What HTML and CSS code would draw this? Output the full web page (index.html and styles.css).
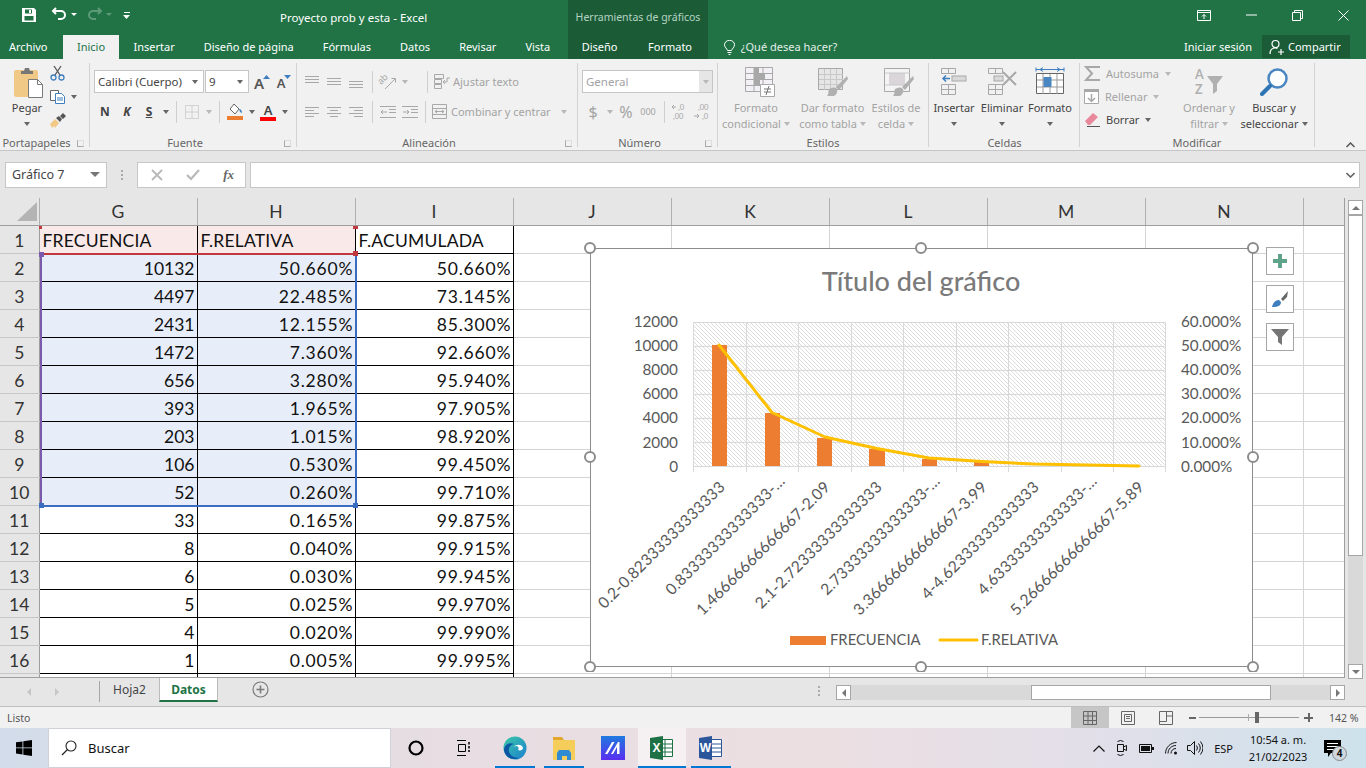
FILE: index.html
```html
<!DOCTYPE html>
<html lang="es">
<head>
  <meta charset="UTF-8" />
  <title>Proyecto prob y esta - Excel</title>
  <link rel="stylesheet" href="styles.css">
</head>
<body>

  <!-- barra de titulo -->
  <header class="titlebar">
    <div class="qat">
      <svg class="qat-save" width="16" height="16" viewBox="0 0 16 16"><path fill="#fff" fill-rule="evenodd" d="M1 1h12l2 2v12H1zM4 2.500v4h7v-4zM3.500 9v4.500h9V9z"/><rect x="8" y="3" width="2" height="3" fill="#fff"/></svg>
      <svg class="qat-undo" width="17" height="14" viewBox="0 0 17 14"><path fill="none" stroke="#fff" stroke-width="2" d="M5 1 2 4l3 3M2 4h8a4 4 0 0 1 0 8H7"/></svg>
      <span class="qat-caret"></span>
      <svg class="qat-redo" width="17" height="14" viewBox="0 0 17 14"><path fill="none" stroke="#5c9a78" stroke-width="2" d="M12 1l3 3-3 3M15 4H7a4 4 0 0 0 0 8h3"/></svg>
      <span class="qat-caret dim"></span>
      <svg class="qat-more" width="8" height="8" viewBox="0 0 8 8"><path fill="#fff" d="M1 0h6v1H1zM0 3h7L3.500 7z"/></svg>
    </div>
    <div class="doc-title">Proyecto prob y esta - Excel</div>
    <div class="context-title">Herramientas de gráficos</div>
    <div class="win-btns">
      <svg width="14" height="11" viewBox="0 0 14 11"><path fill="none" stroke="#fff" d="M.5.500h13v10H.500zM.5 2.500h13M7 9V4.500M5 6.500l2-2 2 2"/></svg>
      <svg width="11" height="2" viewBox="0 0 11 2"><path stroke="#fff" d="M0 1h11"/></svg>
      <svg width="11" height="11" viewBox="0 0 11 11"><path fill="none" stroke="#fff" d="M.5 2.500h8v8h-8zM2.500 2.500v-2h8v8h-2"/></svg>
      <svg width="11" height="11" viewBox="0 0 11 11"><path stroke="#fff" d="M.5.500l10 10M10.500.500l-10 10"/></svg>
    </div>
  </header>

  <!-- pestanas -->
  <nav class="tabs">
    <span class="tab tab-file">Archivo</span>
    <span class="tab active">Inicio</span>
    <span class="tab">Insertar</span>
    <span class="tab">Diseño de página</span>
    <span class="tab">Fórmulas</span>
    <span class="tab">Datos</span>
    <span class="tab">Revisar</span>
    <span class="tab">Vista</span>
    <div class="context-tabs">
      <span class="tab">Diseño</span>
      <span class="tab">Formato</span>
    </div>
    <div class="tell-me">
      <svg width="11" height="15" viewBox="0 0 11 15"><path fill="none" stroke="#fff" d="M3.500 10.500C3 8.500.5 7.500.5 4.800a5 4.500 0 0 1 10 0c0 2.700-2.500 3.700-3 5.700zM3.500 12.500h4M4.500 14.500h2"/></svg>
      <span>¿Qué desea hacer?</span>
    </div>
    <span class="signin">Iniciar sesión</span>
    <div class="share">
      <svg width="15" height="16" viewBox="0 0 15 16"><path fill="none" stroke="#fff" stroke-width="1.200" d="M6.500 1.500a3.500 3.500 0 1 1 0 7 3.500 3.500 0 0 1 0-7zM1 15c0-3.500 2-6 5.500-6 1 0 1.500.2 2 .4M9 13h6M12 10v6"/></svg>
      <span>Compartir</span>
    </div>
  </nav>

  <!-- cinta -->
  <div class="ribbon">

    <section class="group g-clip">
      <div class="group-body clip-body">
        <div class="paste">
          <svg width="30" height="32" viewBox="0 0 30 32">
            <rect x="0" y="3" width="24" height="27" rx="2" fill="#f0c987"/>
            <path fill="#777" d="M7 4h3l1-3h4l1 3h3v3H7z"/>
            <path fill="#fff" stroke="#7a7a7a" d="M14.500 12.500h9l5 5v13h-14z"/>
            <path fill="none" stroke="#7a7a7a" d="M23.500 12.500v5h5"/>
          </svg>
          <span>Pegar</span>
          <span class="caret"></span>
        </div>
        <div class="clip-tools">
          <svg width="15" height="16" viewBox="0 0 15 16"><path fill="none" stroke="#555" stroke-width="1.300" d="M4 1l6 9M11 1L5 10"/><circle cx="3.500" cy="12.500" r="2.500" fill="none" stroke="#3f7fbf" stroke-width="1.300"/><circle cx="11.500" cy="12.500" r="2.500" fill="none" stroke="#3f7fbf" stroke-width="1.300"/></svg>
          <div class="clip-copy">
            <svg width="15" height="14" viewBox="0 0 15 14"><path fill="#fff" stroke="#666" d="M.5.500h8v10h-8z"/><path fill="#fff" stroke="#3f7fbf" d="M5.500 3.500h6l3 3v7h-9z"/><path stroke="#3f7fbf" d="M7 8h6M7 10h6"/></svg>
            <span class="caret"></span>
          </div>
          <svg width="16" height="15" viewBox="0 0 16 15"><path fill="#f0c987" d="M0 11l5-5 4 4-4 5-1-2-2 2-1-2z"/><path fill="#555" d="M6 5l3-2 3 3-2 3zM10 3l3-3 3 3-3 3z"/></svg>
        </div>
      </div>
      <div class="group-label"><i></i><span>Portapapeles</span><b class="launcher"></b></div>
    </section>

    <section class="group g-font">
      <div class="group-body stack">
        <div class="tool-row">
          <div class="combo combo-font"><span>Calibri (Cuerpo)</span><span class="caret"></span></div>
          <div class="combo combo-size"><span>9</span><span class="caret"></span></div>
          <div class="tool grow-a">A<svg width="7" height="4" viewBox="0 0 7 4"><path fill="#3f7fbf" d="M0 4l3.500-4L7 4z"/></svg></div>
          <div class="tool shrink-a">A<svg width="7" height="4" viewBox="0 0 7 4"><path fill="#3f7fbf" d="M0 0h7L3.500 4z"/></svg></div>
        </div>
        <div class="tool-row">
          <div class="tool fmt">N</div>
          <div class="tool fmt fmt-i">K</div>
          <div class="tool fmt fmt-u">S</div>
          <div class="drop"><span class="caret"></span></div>
          <div class="sep"></div>
          <div class="tool">
            <svg width="14" height="14" viewBox="0 0 14 14"><path fill="none" stroke="#b5b5b5" stroke-dasharray="1 1" d="M.5.500h13v13H.500zM7 .5v13M.5 7h13"/></svg>
          </div>
          <div class="drop"><span class="caret off"></span></div>
          <div class="sep"></div>
          <div class="tool">
            <svg width="17" height="17" viewBox="0 0 17 17"><path fill="#fff" stroke="#666" d="M3 6l4-5 5 5-4 5z"/><path fill="#3f7fbf" d="M12 6c2 0 3 2 3 4l-2-1z"/><rect y="13" width="16" height="4" fill="#ed7d31"/></svg>
          </div>
          <div class="drop"><span class="caret"></span></div>
          <div class="tool color-a"><span>A</span><i></i></div>
          <div class="drop"><span class="caret"></span></div>
        </div>
      </div>
      <div class="group-label"><i></i><span>Fuente</span><b class="launcher"></b></div>
    </section>

    <section class="group g-align">
      <div class="group-body stack off-text">
        <div class="tool-row">
          <div class="tool"><svg width="14" height="14" viewBox="0 0 14 14"><path stroke="#a8a8a8" d="M0 1.500h14M0 4.500h14M0 7.500h14"/></svg></div>
          <div class="tool"><svg width="14" height="14" viewBox="0 0 14 14"><path stroke="#a8a8a8" d="M0 3.500h14M0 6.500h14M0 9.500h14"/></svg></div>
          <div class="tool"><svg width="14" height="14" viewBox="0 0 14 14"><path stroke="#a8a8a8" d="M0 6.500h14M0 9.500h14M0 12.500h14"/></svg></div>
          <div class="sep"></div>
          <div class="tool"><svg width="26" height="26" viewBox="-4 -5 26 26"><text transform="translate(2 11) rotate(-45)" class="orient">ab</text><path fill="none" stroke="#a8a8a8" d="M6 15L16 5M12.500 4.500h4v4"/></svg></div>
          <div class="drop"><span class="caret off"></span></div>
          <div class="sep sep-far"></div>
          <div class="text-tool wrap-text">
            <svg width="16" height="15" viewBox="0 0 16 15"><path fill="none" stroke="#a8a8a8" d="M.5.500h9v4h-9zM.5 5.500h7v4h-7zM.5 10.500h7v4h-7zM16 4h-3v4H9M11 6L9 8l2 2"/></svg>
            <span>Ajustar texto</span>
          </div>
        </div>
        <div class="tool-row">
          <div class="tool"><svg width="14" height="12" viewBox="0 0 14 12"><path stroke="#a8a8a8" d="M0 1.500h14M0 4.500h9M0 7.500h14M0 10.500h9"/></svg></div>
          <div class="tool"><svg width="14" height="12" viewBox="0 0 14 12"><path stroke="#a8a8a8" d="M0 1.500h14M3 4.500h8M0 7.500h14M3 10.500h8"/></svg></div>
          <div class="tool"><svg width="14" height="12" viewBox="0 0 14 12"><path stroke="#a8a8a8" d="M0 1.500h14M5 4.500h9M0 7.500h14M5 10.500h9"/></svg></div>
          <div class="sep"></div>
          <div class="tool"><svg width="16" height="12" viewBox="0 0 16 12"><path fill="none" stroke="#a8a8a8" d="M0 .5h16M9 3.500h7M9 6.500h7M0 11.500h16M7 6H1M3 4L1 6l2 2"/></svg></div>
          <div class="tool"><svg width="16" height="12" viewBox="0 0 16 12"><path fill="none" stroke="#a8a8a8" d="M0 .5h16M9 3.500h7M9 6.500h7M0 11.500h16M1 6h6M5 4l2 2-2 2"/></svg></div>
          <div class="sep sep-near"></div>
          <div class="text-tool merge">
            <svg width="15" height="15" viewBox="0 0 15 15"><path fill="none" stroke="#a8a8a8" d="M.5.500h14v14H.500zM.5 4.500h14M.5 10.500h14M3 7.500h9M5 6L3 7.500 5 9M10 6l2 1.500L10 9"/></svg>
            <span>Combinar y centrar</span>
            <span class="caret off"></span>
          </div>
        </div>
      </div>
      <div class="group-label"><i></i><span>Alineación</span><b class="launcher"></b></div>
    </section>

    <section class="group g-number">
      <div class="group-body stack">
        <div class="tool-row">
          <div class="combo combo-number"><span>General</span><div class="combo-btn"><span class="caret off"></span></div></div>
        </div>
        <div class="tool-row num-tools">
          <div class="tool num-big">$</div>
          <div class="drop"><span class="caret off"></span></div>
          <div class="tool num-big">%</div>
          <div class="tool num-000">000</div>
          <div class="sep"></div>
          <div class="tool"><svg width="18" height="19" viewBox="0 0 18 19"><path fill="none" stroke="#a8a8a8" d="M5 5H1M3 3L1 5l2 2"/><text x="7" y="8" class="tiny">,0</text><text x="2" y="17" class="tiny">,00</text></svg></div>
          <div class="tool"><svg width="18" height="19" viewBox="0 0 18 19"><path fill="none" stroke="#a8a8a8" d="M1 14h5M4 12l2 2-2 2"/><text x="5" y="8" class="tiny">,00</text><text x="9" y="17" class="tiny">,0</text></svg></div>
        </div>
      </div>
      <div class="group-label"><i></i><span>Número</span><b class="launcher"></b></div>
    </section>

    <section class="group g-styles">
      <div class="group-body big-row off-text">
        <div class="big big-cond">
          <svg width="30" height="30" viewBox="0 0 30 30"><path fill="#f4f1f6" stroke="#a8a8a8" d="M.5.500h27v24H.500z"/><path stroke="#a8a8a8" d="M9 1v24M18 1v24M1 6.500h27M1 12.500h27M1 18.500h27"/><path fill="#a8a8a8" d="M9 1h5v5H9zM9 7h11v5H9zM9 13h6v5H9z"/><path fill="#fff" stroke="#a8a8a8" d="M15.500 17.500h14v12h-14z"/><path stroke="#777" d="M19 22h7M19 25h7M21 28l3-9"/></svg>
          <span>Formato<br>condicional<span class="caret off inline"></span></span>
        </div>
        <div class="big big-table">
          <svg width="30" height="30" viewBox="0 0 30 30"><path fill="#e6e6e6" stroke="#a8a8a8" d="M.5 1.500h24v21H.500z"/><path stroke="#c8c8c8" d="M6.500 2v21M12.500 2v21M18.500 2v21M1 7.500h24M1 12.500h24M1 17.500h24"/><path fill="#b0b0b0" d="M29 9L18 20l3 3L30 12zM11 22c3-2 6-2 8 0 1 3-1 6-3 7h-7c2-2 1-5 2-7z"/></svg>
          <span>Dar formato<br>como tabla<span class="caret off inline"></span></span>
        </div>
        <div class="big big-cell">
          <svg width="30" height="30" viewBox="0 0 30 30"><path fill="#f4f4f4" stroke="#a8a8a8" d="M.5 1.500h25v23H.500z"/><rect x="5" y="6" width="16" height="12" fill="#d9d5d9"/><path stroke="#c8c8c8" d="M1 6h25M1 18h25"/><path fill="#b0b0b0" d="M29 9L18 20l3 3L30 12zM11 22c3-2 6-2 8 0 1 3-1 6-3 7h-7c2-2 1-5 2-7z"/></svg>
          <span>Estilos de<br>celda<span class="caret off inline"></span></span>
        </div>
      </div>
      <div class="group-label plain"><i></i><span>Estilos</span><i></i></div>
    </section>

    <section class="group g-cells">
      <div class="group-body big-row">
        <div class="big big-48">
          <svg width="30" height="30" viewBox="0 0 30 30"><path fill="none" stroke="#a8a8a8" d="M2.500 1.500h14v5h-14zM9.500 1.500v5M2.500 17.500h14v10h-14zM2.500 22.500h14M9.500 17.500v10"/><rect x="13" y="9" width="14" height="5" fill="#d9d9d9" stroke="#a8a8a8"/><path fill="none" stroke="#3f7fbf" stroke-width="1.500" d="M11 11.500H4M7 8.500l-3 3 3 3"/></svg>
          <span>Insertar</span><span class="caret"></span>
        </div>
        <div class="big big-48">
          <svg width="30" height="30" viewBox="0 0 30 30"><path fill="none" stroke="#a8a8a8" d="M1.500 1.500h14v5h-14zM8.500 1.500v5M1.500 17.500h14v10h-14zM1.500 22.500h14M8.500 17.500v10"/><rect x="7" y="9" width="9" height="5" fill="#d9d9d9" stroke="#a8a8a8"/><path fill="none" stroke="#a8a8a8" stroke-width="2" d="M16 5l13 13M29 5L16 18"/></svg>
          <span>Eliminar</span><span class="caret"></span>
        </div>
        <div class="big big-48">
          <svg width="30" height="30" viewBox="0 0 30 30"><path fill="none" stroke="#3f7fbf" d="M1 2.500h28M1 .5v4M29 .5v4M5 2.500l3-2M5 2.500l3 2M25 2.500l-3-2M25 2.500l-3 2"/><path fill="#fff" stroke="#666" d="M1.500 6.500h27v20H1.500z"/><path stroke="#999" d="M8 7v20M15 7v20M22 7v20M2 13h26M2 20h26"/><rect x="8.500" y="10" width="8" height="10" fill="#4a86c2"/></svg>
          <span>Formato</span><span class="caret"></span>
        </div>
      </div>
      <div class="group-label plain"><i></i><span>Celdas</span><i></i></div>
    </section>

    <section class="group g-edit">
      <div class="group-body big-row">
        <div class="edit-col">
          <div class="edit-item off-text">
            <svg width="16" height="15" viewBox="0 0 16 15"><path fill="none" stroke="#a8a8a8" stroke-width="2" d="M15 2V1H2l6 6.500L2 14h13v-1"/></svg>
            <span>Autosuma</span><span class="caret off"></span>
          </div>
          <div class="edit-item off-text">
            <svg width="15" height="15" viewBox="0 0 15 15"><path fill="#fff" stroke="#a8a8a8" d="M.5.500h14v14H.500z"/><rect width="15" height="3" fill="#a8a8a8"/><path fill="none" stroke="#a8a8a8" stroke-width="1.500" d="M7.500 5v7M4 9l3.500 3.500L11 9"/></svg>
            <span>Rellenar</span><span class="caret off"></span>
          </div>
          <div class="edit-item">
            <svg width="16" height="15" viewBox="0 0 16 15"><path fill="#e8899b" d="M1 9l8-8 5 4-8 8H4z"/><path stroke="#555" d="M3 14.500h13"/></svg>
            <span>Borrar</span><span class="caret"></span>
          </div>
        </div>
        <div class="big big-sort off-text">
          <svg width="30" height="30" viewBox="0 0 30 30"><text x="1" y="12" class="az">A</text><text x="1" y="27" class="az">Z</text><path fill="#b0b0b0" d="M13 9h16l-6 8v7l-4 3V17z"/></svg>
          <span>Ordenar y<br>filtrar<span class="caret off inline"></span></span>
        </div>
        <div class="big big-find">
          <svg width="30" height="30" viewBox="0 0 30 30"><circle cx="18.500" cy="11.500" r="9" fill="#fff" stroke="#4a86c2" stroke-width="2.500"/><path stroke="#2e75b6" stroke-width="4" stroke-linecap="round" d="M11 19l-8 8"/></svg>
          <span>Buscar y<br>seleccionar<span class="caret inline"></span></span>
        </div>
      </div>
      <div class="group-label plain"><i></i><span>Modificar</span><i></i></div>
    </section>

    <svg class="collapse" width="9" height="6" viewBox="0 0 9 6"><path fill="none" stroke="#555" stroke-width="1.500" d="M.5 5l4-4 4 4"/></svg>
  </div>

  <!-- barra de formulas -->
  <div class="formula-bar">
    <div class="name-box"><span>Gráfico 7</span><span class="caret dark"></span></div>
    <div class="fb-dots"></div>
    <div class="fb-btns">
      <svg width="12" height="12" viewBox="0 0 12 12"><path stroke="#b8b8b8" stroke-width="1.800" d="M1 1l10 10M11 1L1 11"/></svg>
      <svg width="14" height="12" viewBox="0 0 14 12"><path fill="none" stroke="#b8b8b8" stroke-width="2.200" d="M1 6l4 4 8-9"/></svg>
      <span class="fx">fx</span>
    </div>
    <div class="fb-input">
      <svg width="9" height="6" viewBox="0 0 9 6"><path fill="none" stroke="#666" stroke-width="1.600" d="M.5 1l4 4 4-4"/></svg>
    </div>
  </div>

  <!-- hoja -->
  <main class="sheet-area">
    <div class="sheet">
      <table class="grid">
        <thead>
          <tr>
            <th class="corner"><svg width="20" height="19" viewBox="0 0 20 19"><path fill="#b4b4b4" d="M20 0v19H0z"/></svg></th>
            <th>G</th><th>H</th><th>I</th><th>J</th><th>K</th><th>L</th><th>M</th><th>N</th><th class="filler"></th>
          </tr>
        </thead>
        <tbody>
          <tr class="first"><th>1</th><td class="data head-sel txt">FRECUENCIA</td><td class="data head-sel txt">F.RELATIVA</td><td class="data txt">F.ACUMULADA</td><td></td><td></td><td></td><td></td><td></td><td></td></tr>
          <tr><th>2</th><td class="data sel">10132</td><td class="data sel pct">50.660%</td><td class="data pct">50.660%</td><td></td><td></td><td></td><td></td><td></td><td></td></tr>
          <tr><th>3</th><td class="data sel">4497</td><td class="data sel pct">22.485%</td><td class="data pct">73.145%</td><td></td><td></td><td></td><td></td><td></td><td></td></tr>
          <tr><th>4</th><td class="data sel">2431</td><td class="data sel pct">12.155%</td><td class="data pct">85.300%</td><td></td><td></td><td></td><td></td><td></td><td></td></tr>
          <tr><th>5</th><td class="data sel">1472</td><td class="data sel pct">7.360%</td><td class="data pct">92.660%</td><td></td><td></td><td></td><td></td><td></td><td></td></tr>
          <tr><th>6</th><td class="data sel">656</td><td class="data sel pct">3.280%</td><td class="data pct">95.940%</td><td></td><td></td><td></td><td></td><td></td><td></td></tr>
          <tr><th>7</th><td class="data sel">393</td><td class="data sel pct">1.965%</td><td class="data pct">97.905%</td><td></td><td></td><td></td><td></td><td></td><td></td></tr>
          <tr><th>8</th><td class="data sel">203</td><td class="data sel pct">1.015%</td><td class="data pct">98.920%</td><td></td><td></td><td></td><td></td><td></td><td></td></tr>
          <tr><th>9</th><td class="data sel">106</td><td class="data sel pct">0.530%</td><td class="data pct">99.450%</td><td></td><td></td><td></td><td></td><td></td><td></td></tr>
          <tr><th>10</th><td class="data sel">52</td><td class="data sel pct">0.260%</td><td class="data pct">99.710%</td><td></td><td></td><td></td><td></td><td></td><td></td></tr>
          <tr><th>11</th><td class="data">33</td><td class="data pct">0.165%</td><td class="data pct">99.875%</td><td></td><td></td><td></td><td></td><td></td><td></td></tr>
          <tr><th>12</th><td class="data">8</td><td class="data pct">0.040%</td><td class="data pct">99.915%</td><td></td><td></td><td></td><td></td><td></td><td></td></tr>
          <tr><th>13</th><td class="data">6</td><td class="data pct">0.030%</td><td class="data pct">99.945%</td><td></td><td></td><td></td><td></td><td></td><td></td></tr>
          <tr><th>14</th><td class="data">5</td><td class="data pct">0.025%</td><td class="data pct">99.970%</td><td></td><td></td><td></td><td></td><td></td><td></td></tr>
          <tr><th>15</th><td class="data">4</td><td class="data pct">0.020%</td><td class="data pct">99.990%</td><td></td><td></td><td></td><td></td><td></td><td></td></tr>
          <tr><th>16</th><td class="data">1</td><td class="data pct">0.005%</td><td class="data pct">99.995%</td><td></td><td></td><td></td><td></td><td></td><td></td></tr>
          <tr><th></th><td class="data"></td><td class="data"></td><td class="data"></td><td></td><td></td><td></td><td></td><td></td><td></td></tr>
        </tbody>
      </table>

      <!-- marcas del rango de datos -->
      <i class="mark mark-red"></i>
      <i class="mark mark-purple"></i>
      <i class="mark mark-blue-r"></i>
      <i class="mark mark-blue-b"></i>
      <i class="knob knob-r1"></i>
      <i class="knob knob-r2"></i>
      <i class="knob knob-r3"></i>
      <i class="knob knob-p1"></i>
      <i class="knob knob-b1"></i>
      <i class="knob knob-b2"></i>

      <!-- grafico -->
      <svg class="chart" width="680" height="432" viewBox="582 240 680 432">
        <defs>
          <pattern id="hatch" width="4" height="4" patternUnits="userSpaceOnUse">
            <rect width="4" height="4" fill="#fff"/>
            <path d="M-1 1l2 -2M0 0l4 4M3 5l2-2" stroke="#dedede" stroke-width="1"/>
          </pattern>
        </defs>
        <rect x="590.500" y="248.500" width="662" height="418" fill="#fff" stroke="#8c8c8c"/>
        <text x="921" y="291" class="chart-title">Título del gráfico</text>

        <rect x="693" y="322" width="473" height="144" fill="url(#hatch)"/>
        <path class="gridline" d="M693 322.500h473M693 346.500h473M693 370.500h473M693 394.500h473M693 418.500h473M693 442.500h473M693 466.500h473"/>
        <path class="gridline" d="M693.500 322v150M746.500 322v150M798.500 322v150M851.500 322v150M903.500 322v150M956.500 322v150M1008.500 322v150M1061.500 322v150M1113.500 322v150M1165.500 322v150"/>

        <g class="bars">
          <rect x="712" y="345" width="15" height="121"/>
          <rect x="765" y="413" width="15" height="53"/>
          <rect x="817" y="438" width="15" height="28"/>
          <rect x="869" y="449" width="16" height="17"/>
          <rect x="922" y="459" width="15" height="7"/>
          <rect x="974" y="462" width="15" height="4"/>
        </g>
        <path class="freq-line" d="M719 345L772 412.500L825 437L877 448.500L929 458L982 461.500L1034 464L1087 465L1139 466"/>

        <g class="axis axis-left">
          <text x="678" y="327">12000</text>
          <text x="678" y="351">10000</text>
          <text x="678" y="375">8000</text>
          <text x="678" y="399">6000</text>
          <text x="678" y="423">4000</text>
          <text x="678" y="448">2000</text>
          <text x="678" y="472">0</text>
        </g>
        <g class="axis axis-right">
          <text x="1181" y="327">60.000%</text>
          <text x="1181" y="351">50.000%</text>
          <text x="1181" y="375">40.000%</text>
          <text x="1181" y="399">30.000%</text>
          <text x="1181" y="423">20.000%</text>
          <text x="1181" y="448">10.000%</text>
          <text x="1181" y="472">0.000%</text>
        </g>
        <g class="axis axis-cat">
          <text transform="translate(726 488) rotate(-45)">0.2-0.82333333333333</text>
          <text transform="translate(786 482) rotate(-45)">0.83333333333333-…</text>
          <text transform="translate(831 488) rotate(-45)">1.46666666666667-2.09</text>
          <text transform="translate(883 488) rotate(-45)">2.1-2.72333333333333</text>
          <text transform="translate(941 482) rotate(-45)">2.73333333333333-…</text>
          <text transform="translate(988 488) rotate(-45)">3.36666666666667-3.99</text>
          <text transform="translate(1040 488) rotate(-45)">4-4.62333333333333</text>
          <text transform="translate(1098 482) rotate(-45)">4.63333333333333-…</text>
          <text transform="translate(1145 488) rotate(-45)">5.26666666666667-5.89</text>
        </g>

        <rect x="790" y="636" width="36" height="9" fill="#ed7d31"/>
        <text x="830" y="645" class="legend">FRECUENCIA</text>
        <path class="freq-line" d="M940 640h37"/>
        <text x="981" y="645" class="legend">F.RELATIVA</text>

        <g class="handles">
          <circle cx="590" cy="248" r="5"/><circle cx="921" cy="248" r="5"/><circle cx="1253" cy="248" r="5"/>
          <circle cx="590" cy="457" r="5"/><circle cx="1253" cy="457" r="5"/>
          <circle cx="590" cy="667" r="5"/><circle cx="921" cy="667" r="5"/><circle cx="1253" cy="667" r="5"/>
        </g>
      </svg>

      <div class="chart-btns">
        <div class="chart-btn"><svg width="14" height="14" viewBox="0 0 14 14"><path fill="#5fa48a" d="M5 0h4v5h5v4H9v5H5V9H0V5h5z"/></svg></div>
        <div class="chart-btn"><svg width="18" height="18" viewBox="0 0 18 18"><path fill="#666" d="M10 9l7-8-1 6-4 4z"/><path fill="#3f7fbf" d="M1 17c1-4 3-7 7-7l2 2c0 3-2 5-9 5z"/></svg></div>
        <div class="chart-btn"><svg width="18" height="16" viewBox="0 0 18 16"><path fill="#757575" d="M0 0h18l-7 8v8l-4-3V8z"/></svg></div>
      </div>
    </div>

    <div class="vscroll">
      <div class="sb-btn"><span class="sb-up"></span></div>
      <div class="vthumb"></div>
      <div class="sb-btn sb-end"><span class="sb-down"></span></div>
    </div>
  </main>

  <!-- pestanas de hoja -->
  <div class="sheet-tabs">
    <div class="sheet-nav"><span class="arr-l"></span><span class="arr-r"></span></div>
    <span class="sheet-tab">Hoja2</span>
    <span class="sheet-tab current">Datos</span>
    <svg class="add-sheet" width="17" height="17" viewBox="0 0 17 17"><circle cx="8.500" cy="8.500" r="7.500" fill="none" stroke="#7a7a7a" stroke-width="1.200"/><path stroke="#7a7a7a" stroke-width="1.600" d="M8.500 4.500v8M4.500 8.500h8"/></svg>
    <div class="tab-dots"></div>
    <div class="hscroll">
      <div class="sb-btn"><span class="arr-l dark"></span></div>
      <div class="hthumb"></div>
      <div class="sb-btn"><span class="arr-r dark"></span></div>
    </div>
  </div>

  <!-- barra de estado -->
  <div class="statusbar">
    <span class="status-text">Listo</span>
    <div class="view-btn on"><svg width="14" height="14" viewBox="0 0 14 14"><path fill="none" stroke="#666" d="M.5.500h13v13H.500zM5 .5v13M9.500.500v13M.5 5h13M.5 9.500h13"/></svg></div>
    <div class="view-btn"><svg width="14" height="14" viewBox="0 0 14 14"><path fill="none" stroke="#666" d="M.5.500h13v13H.500zM3.500 3.500h7v7h-7zM5 5.500h4M5 7.500h4"/></svg></div>
    <div class="view-btn"><svg width="14" height="14" viewBox="0 0 14 14"><path fill="none" stroke="#666" d="M.5.500h13v13H.500zM.5 10.500h7v-10M7.500 5h6"/></svg></div>
    <div class="zoom">
      <span class="zoom-minus"></span>
      <div class="zoom-track"><i class="zoom-tick"></i><i class="zoom-thumb"></i></div>
      <span class="zoom-plus"></span>
    </div>
    <span class="zoom-value">142 %</span>
  </div>

  <!-- barra de tareas -->
  <footer class="taskbar">
    <div class="start"><svg width="16" height="16" viewBox="0 0 16 16"><path fill="#000" d="M0 2.300l6.500-.9V7.500H0zM7.300 1.300L16 0v7.500H7.300zM0 8.300h6.500v6.200L0 13.600zM7.300 8.300H16V16l-8.700-1.200z"/></svg></div>
    <div class="search">
      <svg width="16" height="16" viewBox="0 0 16 16"><circle cx="10" cy="6" r="5" fill="none" stroke="#222" stroke-width="1.100"/><path stroke="#222" stroke-width="1.200" d="M6.500 9.500L1 15"/></svg>
      <span>Buscar</span>
    </div>
    <div class="task-app"><svg width="16" height="16" viewBox="0 0 16 16"><circle cx="8" cy="8" r="6.500" fill="none" stroke="#000" stroke-width="2.200"/></svg></div>
    <div class="task-app"><svg width="16" height="16" viewBox="0 0 16 16"><path fill="none" stroke="#000" d="M1 .5h9M1 15.500h9M2.500 4.500h7v7h-7z"/><path stroke="#000" stroke-width="1.500" d="M13 2v2.500M13 6v2.500M13 10v2"/></svg></div>
    <div class="task-app running app-edge">
      <svg width="24" height="24" viewBox="0 0 24 24">
        <defs><linearGradient id="edgeA" x1="0" y1="0" x2="1" y2="1"><stop offset="0" stop-color="#3bc9a7"/><stop offset="1" stop-color="#1b7fd0"/></linearGradient></defs>
        <circle cx="12" cy="12" r="11.500" fill="url(#edgeA)"/>
        <path fill="#0b57a4" d="M1 13c1-5 6-7 10-5-4 1-6 4-5 8 1 3 5 6 10 6-8 3-15-2-15-9z"/>
        <path fill="#fff" d="M11 11c2-3 8-3 9 1 0 2-3 3-5 2 1-1 1-3-1-4-1 0-2 0-3 1z"/>
      </svg>
    </div>
    <div class="task-app running app-files">
      <svg width="22" height="23" viewBox="0 0 22 23"><path fill="#e2a72c" d="M0 0h9l2 3H0z"/><path fill="#f5cd5a" d="M0 3h22v20H0z"/><path fill="#2f8bd4" d="M6 13h10l2 3v7h-4v-4H9v4H4v-7z"/></svg>
    </div>
    <div class="task-app app-m">
      <svg width="24" height="24" viewBox="0 0 24 24">
        <defs><linearGradient id="mGrad" x1="0" y1="0" x2="0" y2="1"><stop offset="0" stop-color="#1f7ae0"/><stop offset="1" stop-color="#5a2ef0"/></linearGradient></defs>
        <rect width="24" height="24" fill="url(#mGrad)"/>
        <path fill="#fff" d="M4 18L11 6h2.500l-7 12zM10 18l7-12h1.500v12h-2.500v-7l-4 7z"/>
      </svg>
    </div>
    <div class="task-app running current-app app-xl">
      <svg width="24" height="24" viewBox="0 0 24 24"><path fill="#fff" stroke="#1e7145" d="M9.500 3.500h13v17h-13z"/><path stroke="#1e7145" d="M15 4v16M10 8h12M10 12h12M10 16h12"/><path fill="#1e7145" d="M0 2l13-2v24L0 22z"/><text x="6.500" y="16" class="app-letter">X</text></svg>
    </div>
    <div class="task-app running app-word">
      <svg width="24" height="24" viewBox="0 0 24 24"><path fill="#fff" stroke="#2b579a" d="M9.500 3.500h13v17h-13z"/><path stroke="#2b579a" d="M13 8h9M13 12h9M13 16h9"/><path fill="#2b579a" d="M0 2l13-2v24L0 22z"/><text x="6.500" y="16" class="app-letter">W</text></svg>
    </div>

    <div class="tray">
      <svg width="12" height="7" viewBox="0 0 12 7"><path fill="none" stroke="#111" stroke-width="1.200" d="M.5 6.500L6 1l5.500 5.500"/></svg>
      <svg width="12" height="18" viewBox="0 0 12 18"><path fill="none" stroke="#111" d="M1.500 5.500h6v7h-6zM7.500 8l3-1.500v5l-3-1.500M1.500 2.500q3-2 6 0M1.500 15.500q3 2 6 0"/></svg>
      <svg width="15" height="9" viewBox="0 0 15 9"><path fill="none" stroke="#111" d="M.5.500h12v8H.500z"/><rect x="2" y="2" width="9" height="5" fill="#111"/><rect x="13" y="3" width="2" height="3" fill="#111"/></svg>
      <svg width="14" height="13" viewBox="0 0 14 13"><path fill="none" stroke="#111" d="M.5 11.500c0-6 5-11 11-11M3 11.500c0-4.500 3.500-8 8-8M6 11.500c0-3 2-5 5-5"/><circle cx="10.500" cy="11" r="1.500" fill="#111"/></svg>
      <svg class="tray-sound" width="16" height="14" viewBox="0 0 16 14"><path fill="none" stroke="#111" d="M.5 4.500h3l4-4v13l-4-4h-3zM9.500 4.500q2 2.500 0 5M11.500 2.500q3.500 4.500 0 9M13.500.5q5 6.500 0 13"/></svg>
      <span class="lang">ESP</span>
      <div class="clock"><span>10:54 a. m.</span><span>21/02/2023</span></div>
      <div class="notify">
        <svg width="17" height="17" viewBox="0 0 17 17"><path fill="#000" d="M0 0h17v13H7l-3 4v-4H0z"/><path stroke="#fff" d="M3 3.500h11M3 6.500h11M3 9.500h7"/></svg>
        <span class="badge">4</span>
      </div>
    </div>
  </footer>

</body>
</html>
```

FILE: styles.css
```css
* {
  box-sizing: border-box;
}

html, body {
  margin: 0;
  height: 768px;
  overflow: hidden;
}

body {
  width: 1366px;
  font-family: "Noto Sans", "Open Sans", sans-serif;
  font-size: 11px;
  color: #444;
  background: #e6e6e6;
}

svg {
  display: block;
  flex: none;
}

.caret {
  display: inline-block;
  width: 0;
  height: 0;
  border-left: 3.5px solid transparent;
  border-right: 3.5px solid transparent;
  border-top: 4px solid #666;
}

.caret.off {
  border-top-color: #b8b8b8;
}

.caret.dark {
  border-left-width: 5px;
  border-right-width: 5px;
  border-top-width: 5px;
  border-top-color: #777;
}

.caret.inline {
  margin-left: 3px;
  vertical-align: 2px;
}

/* titulo */
.titlebar {
  display: flex;
  height: 35px;
  background: #217346;
  color: #fff;
}

.qat {
  display: flex;
  align-items: center;
  width: 280px;
  padding: 0 0 5px 21px;
}

.qat-undo { margin-left: 14px; margin-top: -2px; }
.qat-redo { margin-left: 9px; margin-top: -2px; }
.qat-more { margin-left: 11px; margin-top: 1px; }

.qat-caret {
  margin-left: 3px;
  margin-top: -2px;
  border-left: 3px solid transparent;
  border-right: 3px solid transparent;
  border-top: 3px solid #fff;
}

.qat-caret.dim {
  border-top-color: #5c9a78;
}

.doc-title {
  width: 288px;
  line-height: 35px;
  font-size: 11.5px;
}

.context-title {
  width: 140px;
  background: #1b5c37;
  color: #b6d3c2;
  line-height: 35px;
  font-size: 10.5px;
  text-align: center;
}

.win-btns {
  display: flex;
  align-items: center;
  margin-left: auto;
  height: 30px;
}

.win-btns svg {
  margin-right: 35px;
}

.win-btns svg:last-child { margin-right: 17px; }

/* pestanas */
.tabs {
  display: flex;
  align-items: stretch;
  height: 24px;
  background: #217346;
  color: #fff;
  line-height: 24px;
}

.tab {
  padding: 0 14.5px;
  white-space: nowrap;
}

.tab-file {
  width: 63px;
  padding: 0 0 0 9px;
}

.tab.active {
  width: 56px;
  padding: 0;
  text-align: center;
  background: #f1f1f1;
  color: #217346;
}

.context-tabs {
  display: flex;
  width: 140px;
  margin-left: 3px;
  background: #1b5c37;
}

.context-tabs .tab:first-child { padding-left: 14px; }
.context-tabs .tab:last-child { padding-left: 16px; padding-right: 0; }

.tell-me {
  display: flex;
  align-items: center;
  gap: 6px;
  margin-left: 16px;
  color: #e4efe9;
}

.signin {
  margin-left: auto;
}

.share {
  display: flex;
  align-items: center;
  gap: 4px;
  width: 88px;
  height: 23px;
  margin: 0 16px 0 10px;
  padding-left: 7px;
  background: #1b5c37;
}

/* cinta */
.ribbon {
  display: flex;
  height: 92px;
  padding-top: 4px;
  background: #f1f1f1;
  border-bottom: 1px solid #c6c6c6;
}

.group {
  display: flex;
  flex-direction: column;
  flex: none;
  height: 84px;
  border-right: 1px solid #d2d2d2;
}

.g-clip { width: 90px; }
.g-font { width: 207px; padding-left: 4px; }
.g-align { width: 281px; padding-left: 4px; }
.g-number { width: 140px; padding-left: 4px; }
.g-styles { width: 211px; }
.g-cells { width: 151px; padding-left: 1px; }
.g-edit { width: 235px; padding-left: 4px; }

.group-body {
  height: 73px;
  flex: none;
}

.group-label {
  display: grid;
  grid-template-columns: 1fr auto 1fr;
  align-items: center;
  height: 14px;
  padding-right: 16px;
  line-height: 14px;
  font-size: 11px;
  color: #666;
  white-space: nowrap;
}

.group-label.plain {
  padding-right: 0;
}

.g-font .group-label,
.g-align .group-label,
.g-number .group-label,
.g-edit .group-label {
  margin-left: -4px;
}

.launcher {
  justify-self: end;
  width: 7px;
  height: 7px;
  margin-right: -11px;
  border-left: 1px solid #aaa;
  border-bottom: 1px solid #aaa;
  border-top: 1px solid #ddd;
  border-right: 1px solid #ddd;
}

.off-text { color: #a3a3a3; }

.stack {
  display: flex;
  flex-direction: column;
  gap: 7px;
  padding-top: 7px;
}

.tool-row {
  display: flex;
  align-items: center;
  height: 23px;
}

.tool {
  display: flex;
  align-items: center;
  justify-content: center;
  width: 22px;
  height: 23px;
  flex: none;
}

.drop {
  display: flex;
  align-items: center;
  justify-content: center;
  width: 11px;
  flex: none;
}

.sep {
  width: 1px;
  height: 22px;
  margin: 0 4px 0 5px;
  background: #cfcfcf;
  flex: none;
}

.sep-far { margin-left: 17px; margin-right: 3px; }
.sep-near { margin-left: 4px; margin-right: 3px; }

.combo {
  display: flex;
  align-items: center;
  justify-content: space-between;
  height: 23px;
  padding: 0 5px 0 3px;
  background: #fff;
  border: 1px solid #c6c6c6;
  font-size: 11.5px;
  flex: none;
}

.combo-font { width: 110px; }
.combo-size { width: 44px; margin-left: 1px; }

.combo-number {
  width: 131px;
  padding-right: 0;
  color: #a3a3a3;
}

.combo-btn {
  display: flex;
  align-items: center;
  justify-content: center;
  width: 13px;
  height: 21px;
  background: #e6e6e6;
}

.grow-a, .shrink-a {
  align-items: flex-end;
  font-weight: 600;
  color: #555;
}

.grow-a { margin-left: 2px; font-size: 15px; line-height: 20px; }
.shrink-a { font-size: 13px; line-height: 20px; }
.grow-a svg, .shrink-a svg { margin: 0 0 14px -1px; }

.fmt {
  font-size: 12px;
  font-weight: 700;
  color: #444;
}

.fmt-i { font-style: italic; }
.fmt-u { text-decoration: underline; }

.color-a {
  flex-direction: column;
  font-size: 13px;
  font-weight: 600;
  line-height: 14px;
}

.color-a i {
  width: 16px;
  height: 4px;
  background: #f00;
}

.orient {
  font-size: 9px;
  fill: #a8a8a8;
}

.text-tool {
  display: flex;
  align-items: center;
  gap: 4px;
  margin-left: 3px;
  white-space: nowrap;
}

.wrap-text {
  gap: 3px;
}

.merge {
  width: 140px;
}

.merge .caret {
  margin-left: auto;
  margin-right: 5px;
}

.num-tools {
  color: #a3a3a3;
}

.num-big {
  font-size: 16px;
}

.num-000 {
  font-size: 9px;
}

.tiny {
  font-family: Lato, sans-serif;
  font-size: 7.5px;
  fill: #a3a3a3;
}

/* botones grandes */
.big-row {
  display: flex;
}

.big {
  display: flex;
  flex-direction: column;
  align-items: center;
  flex: none;
  padding-top: 4px;
  line-height: 16px;
  text-align: center;
  white-space: nowrap;
}

.big > svg {
  margin-bottom: 3px;
}

.big-cond { width: 76px; }
.big-cond > svg { margin-left: 8px; }
.big-table { width: 77px; }
.big-cell { width: 50px; }
.big-cell > svg { margin-left: 6px; }
.big-48 { width: 48px; }
.big-48 .caret { margin-top: 6px; }
.big-sort { width: 58px; }
.big-find { width: 72px; }

.az {
  font-family: Lato, sans-serif;
  font-size: 12.5px;
  font-weight: 700;
  fill: #b0b0b0;
}

.edit-col {
  display: flex;
  flex-direction: column;
  width: 96px;
  margin-top: -1px;
  flex: none;
}

.edit-item {
  display: flex;
  align-items: center;
  gap: 6px;
  height: 23px;
}

.clip-body {
  display: flex;
}

.paste {
  display: flex;
  flex-direction: column;
  align-items: center;
  width: 44px;
  margin-left: 5px;
  padding-top: 4px;
  line-height: 16px;
}

.paste > svg {
  margin-left: 3px;
  margin-bottom: 1px;
}

.paste .caret {
  margin-top: 6px;
}

.clip-tools {
  display: flex;
  flex-direction: column;
  gap: 9px;
  padding: 2px 0 0 1px;
}

.clip-copy {
  display: flex;
  align-items: center;
  gap: 6px;
}

.collapse {
  align-self: flex-end;
  margin: 0 11px 2px auto;
}

/* barra de formulas */
.formula-bar {
  display: flex;
  align-items: center;
  height: 47px;
  padding: 0 6px 0 5px;
}

.name-box {
  display: flex;
  align-items: center;
  justify-content: space-between;
  width: 102px;
  height: 26px;
  padding: 0 6px;
  background: #fff;
  border: 1px solid #c6c6c6;
  font-size: 12.5px;
}

.fb-dots {
  width: 3px;
  height: 10px;
  margin: 0 13px 0 14px;
  border-left: 2px dotted #aaa;
}

.fb-btns {
  display: flex;
  align-items: center;
  justify-content: space-between;
  width: 109px;
  height: 26px;
  padding: 0 11px 0 13px;
  background: #fff;
  border: 1px solid #c6c6c6;
}

.fx {
  font-family: "Liberation Serif", serif;
  font-style: italic;
  font-weight: 700;
  font-size: 13px;
  color: #666;
}

.fb-input {
  display: flex;
  align-items: center;
  justify-content: flex-end;
  flex: 1;
  height: 26px;
  margin-left: 4px;
  padding-right: 4px;
  background: #fff;
  border: 1px solid #c6c6c6;
}

/* hoja */
.sheet-area {
  display: flex;
  height: 480px;
}

.sheet {
  position: relative;
  width: 1345px;
  height: 480px;
  overflow: hidden;
  background: #fff;
  border-right: 1px solid #9e9e9e;
  border-bottom: 1px solid #9e9e9e;
}

.grid {
  table-layout: fixed;
  width: 1344px;
  border-collapse: collapse;
  font-family: Lato, "Liberation Sans", sans-serif;
  font-size: 17.5px;
  color: #111;
}

.grid thead th {
  width: 158px;
  height: 27px;
  padding: 0;
  background: #e6e6e6;
  border-right: 1px solid #b0b0b0;
  border-bottom: 1px solid #9e9e9e;
  font-weight: 400;
  color: #333;
}

.grid thead .corner {
  width: 39px;
  vertical-align: middle;
}

.corner svg {
  margin-left: 17px;
}

.grid thead .filler {
  width: 41px;
  border-right: 0;
}

.grid tbody th {
  height: 28px;
  padding: 2px 0 0;
  background: #e6e6e6;
  border-right: 1px solid #9e9e9e;
  border-bottom: 1px solid #c6c6c6;
  font-weight: 400;
  color: #333;
}

.grid td {
  padding: 2px 2px 0 3px;
  border-right: 1px solid #d4d4d4;
  border-bottom: 1px solid #d4d4d4;
  text-align: right;
  white-space: nowrap;
}

.grid td.data {
  border: 1px solid #000;
}

.grid td.txt {
  text-align: left;
  letter-spacing: 0.2px;
}

.grid td.pct {
  padding-right: 1px;
  letter-spacing: 0.85px;
}

.grid td.head-sel {
  background: #f9e9e9;
}

.grid td.sel {
  background: #e8eef9;
}

.mark, .knob {
  position: absolute;
}

.mark-red { left: 41px; top: 55px; width: 315px; height: 2px; background: #c0393f; }
.mark-purple { left: 40px; top: 57px; width: 2px; height: 250px; background: #7b5aae; }
.mark-blue-r { left: 355px; top: 57px; width: 2px; height: 250px; background: #3a6cc0; }
.mark-blue-b { left: 41px; top: 307px; width: 315px; height: 2px; background: #3a6cc0; }

.knob { width: 5px; height: 5px; }
.knob-r1 { left: 39px; top: 28px; width: 3px; height: 3px; background: #c0393f; }
.knob-r2 { left: 353px; top: 28px; background: #c0393f; height: 3px; }
.knob-r3 { left: 353px; top: 53px; background: #c0393f; }
.knob-p1 { left: 39px; top: 54px; background: #7b5aae; }
.knob-b1 { left: 353px; top: 305px; background: #3a6cc0; }
.knob-b2 { left: 39px; top: 305px; background: #3a6cc0; }

.chart {
  position: absolute;
  left: 582px;
  top: 42px;
  font-family: Lato, "Liberation Sans", sans-serif;
}

.chart-title {
  font-size: 27px;
  fill: #7a7a7a;
  font-weight: 500;
  text-anchor: middle;
}

.gridline {
  stroke: #d9d9d9;
  fill: none;
}

.bars rect {
  fill: #ed7d31;
}

.freq-line {
  fill: none;
  stroke: #ffc000;
  stroke-width: 3;
  stroke-linecap: round;
  stroke-linejoin: round;
}

.axis text {
  font-size: 15.3px;
  fill: #595959;
}

.axis-left text {
  text-anchor: end;
}

.axis-cat text {
  font-size: 15.6px;
  letter-spacing: 0.25px;
  text-anchor: end;
}

.legend {
  font-size: 14.8px;
  fill: #595959;
}

.handles circle {
  fill: #fff;
  stroke: #8c8c8c;
  stroke-width: 2;
}

.chart-btns {
  position: absolute;
  left: 1266px;
  top: 49px;
  display: flex;
  flex-direction: column;
  gap: 10px;
}

.chart-btn {
  display: flex;
  align-items: center;
  justify-content: center;
  width: 28px;
  height: 28px;
  background: #fff;
  border: 1px solid #a6a6a6;
}

.vscroll {
  display: flex;
  flex-direction: column;
  width: 15px;
  height: 479px;
  margin: 2px 0 0 3px;
  background: #d9d9d9;
}

.sb-btn {
  display: flex;
  align-items: center;
  justify-content: center;
  width: 15px;
  height: 15px;
  flex: none;
  background: #fff;
  border: 1px solid #a6a6a6;
}

.sb-end {
  margin-top: auto;
}

.sb-up {
  border-left: 4px solid transparent;
  border-right: 4px solid transparent;
  border-bottom: 4px solid #777;
}

.sb-down {
  border-left: 4px solid transparent;
  border-right: 4px solid transparent;
  border-top: 4px solid #777;
}

.vthumb {
  height: 341px;
  background: #fff;
  border: 1px solid #a6a6a6;
}

/* pestanas de hoja */
.sheet-tabs {
  display: flex;
  height: 29px;
  background: #e6e6e6;
  border-bottom: 1px solid #bfbfbf;
}

.sheet-nav {
  display: flex;
  align-items: center;
  gap: 24px;
  width: 100px;
  height: 21px;
  margin-top: 3px;
  padding-left: 27px;
  border-right: 1px solid #a6a6a6;
}

.arr-l {
  border-top: 4px solid transparent;
  border-bottom: 4px solid transparent;
  border-right: 4px solid #c6c6c6;
}

.arr-r {
  border-top: 4px solid transparent;
  border-bottom: 4px solid transparent;
  border-left: 4px solid #c6c6c6;
}

.arr-l.dark { border-right-color: #777; }
.arr-r.dark { border-left-color: #777; }

.sheet-tab {
  width: 59px;
  height: 24px;
  line-height: 23px;
  text-align: center;
  font-size: 12px;
}

.sheet-tab.current {
  background: #fff;
  color: #217346;
  font-weight: 700;
  border-left: 1px solid #bbb;
  border-right: 1px solid #bbb;
  border-bottom: 2px solid #217346;
}

.add-sheet {
  margin: 3px 0 0 34px;
}

.tab-dots {
  width: 2px;
  height: 10px;
  margin: 8px 16px 0 549px;
  border-left: 2px dotted #aaa;
}

.hscroll {
  display: flex;
  width: 509px;
  height: 15px;
  margin-top: 7px;
  background: #d9d9d9;
}

.hthumb {
  width: 240px;
  margin-left: 180px;
  background: #fff;
  border: 1px solid #a6a6a6;
}

.hscroll .sb-btn:last-child {
  margin-left: auto;
}

/* estado */
.statusbar {
  display: flex;
  align-items: center;
  height: 21px;
  background: #f1f1f1;
  font-size: 10.5px;
  color: #555;
}

.status-text {
  margin-left: 7px;
  margin-right: auto;
}

.view-btn {
  display: flex;
  align-items: center;
  justify-content: center;
  width: 38px;
  height: 21px;
  flex: none;
}

.view-btn.on {
  background: #c6c6c6;
}

.zoom {
  display: flex;
  align-items: center;
  gap: 3px;
  flex: none;
}

.zoom-minus {
  width: 7px;
  height: 2px;
  margin-left: 4px;
  background: #666;
  flex: none;
}

.zoom-track {
  position: relative;
  width: 100px;
  height: 1px;
  background: #999;
  flex: none;
}

.zoom-tick {
  position: absolute;
  left: 49px;
  top: -3px;
  width: 1px;
  height: 7px;
  background: #aaa;
}

.zoom-thumb {
  position: absolute;
  left: 56px;
  top: -5px;
  width: 4px;
  height: 11px;
  background: #666;
}

.zoom-plus {
  width: 9px;
  height: 9px;
  margin-left: 2px;
  background:
    linear-gradient(#666, #666) center / 9px 2px no-repeat,
    linear-gradient(#666, #666) center / 2px 9px no-repeat;
  flex: none;
}

.zoom-value {
  width: 37px;
  margin-left: 16px;
  flex: none;
  white-space: nowrap;
}

/* barra de tareas */
.taskbar {
  display: flex;
  align-items: stretch;
  height: 40px;
  background: linear-gradient(90deg, #d2dcea 0%, #e6dde2 30%, #ecdfe2 60%, #e2dfe9 80%, #cde2ec 100%);
  color: #111;
}

.start {
  display: flex;
  align-items: center;
  justify-content: center;
  width: 48px;
  flex: none;
}

.search {
  display: flex;
  align-items: center;
  gap: 11px;
  width: 343px;
  padding-left: 12px;
  background: #fff;
  border: 1px solid #cfd3d8;
  font-size: 13px;
  flex: none;
}

.task-app {
  position: relative;
  display: flex;
  align-items: center;
  justify-content: center;
  width: 48px;
  flex: none;
}

.task-app.running::after {
  content: "";
  position: absolute;
  left: 4px;
  right: 4px;
  bottom: 0;
  height: 2px;
  background: #0078d4;
}

.task-app.current-app::after {
  left: 0;
  right: 0;
}

.current-app {
  background: rgba(255, 255, 255, 0.55);
}

.search + .task-app { margin-left: 1px; }
.app-edge { margin-left: 3px; }
.app-files { margin-left: 1px; }
.app-m { margin-left: 1px; }
.app-xl { margin-left: 1px; }
.app-word { margin-left: 1px; }

.app-letter {
  font-family: "Liberation Sans", sans-serif;
  font-size: 12px;
  font-weight: 700;
  fill: #fff;
  text-anchor: middle;
}

.tray {
  display: flex;
  align-items: center;
  flex: 1;
  justify-content: flex-end;
  gap: 11px;
  padding-right: 25px;
  font-size: 11px;
}

.tray-sound {
  margin-left: -3px;
}

.clock {
  display: flex;
  flex-direction: column;
  align-items: center;
  gap: 1px;
  width: 62px;
  margin: 0 4px 0 3px;
  line-height: 16px;
}

.notify {
  position: relative;
}

.badge {
  position: absolute;
  left: 8px;
  top: 6px;
  width: 15px;
  height: 15px;
  border-radius: 50%;
  border: 1px solid #888;
  background: #cfd7df;
  line-height: 13px;
  font-size: 10px;
  font-weight: 700;
  text-align: center;
}
```
